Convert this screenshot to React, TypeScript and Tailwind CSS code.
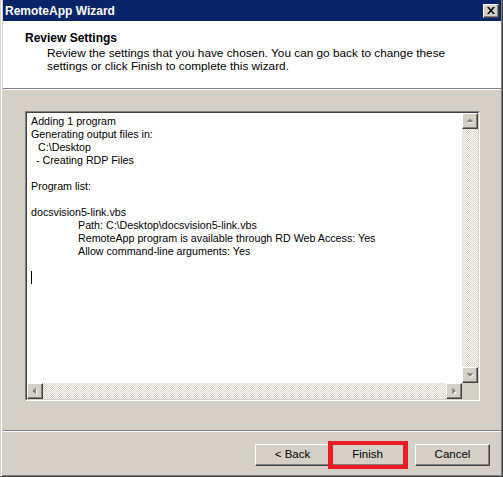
import React from "react";

const bevelOut =
  "border border-t-white border-l-white border-r-[#404040] border-b-[#404040] shadow-[inset_-1px_-1px_0_#808080,inset_1px_1px_0_#d4d0c8]";

function Arrow({ dir }: { dir: "up" | "down" | "left" | "right" }) {
  const pts: Record<string, string> = {
    up: "4,9 8,5 12,9",
    down: "4,6 8,10 12,6",
    left: "9,4 5,8 9,12",
    right: "6,4 10,8 6,12",
  };
  return (
    <svg width="14" height="14" viewBox="0 0 16 16" className="block">
      <polygon points={pts[dir]} fill="#ffffff" transform="translate(1,1)" />
      <polygon points={pts[dir]} fill="#808080" />
    </svg>
  );
}

function ScrollButton({ dir }: { dir: "up" | "down" | "left" | "right" }) {
  return (
    <div className={`w-[16px] h-[16px] shrink-0 bg-[#d4d0c8] flex items-center justify-center ${bevelOut}`}>
      <Arrow dir={dir} />
    </div>
  );
}

const checker = "bg-[repeating-conic-gradient(#d4d0c8_0_25%,#ffffff_0_50%)] bg-[length:2px_2px]";

const lines: { text: string; indent?: string }[] = [
  { text: "Adding 1 program" },
  { text: "Generating output files in:" },
  { text: "C:\\Desktop", indent: "pl-[7px]" },
  { text: "- Creating RDP Files", indent: "pl-[5px]" },
  { text: "" },
  { text: "Program list:" },
  { text: "" },
  { text: "docsvision5-link.vbs" },
  { text: "Path: C:\\Desktop\\docsvision5-link.vbs", indent: "pl-[47px]" },
  { text: "RemoteApp program is available through RD Web Access: Yes", indent: "pl-[47px]" },
  { text: "Allow command-line arguments: Yes", indent: "pl-[47px]" },
  { text: "" },
];

function WizButton({ label }: { label: string }) {
  return (
    <button
      className={`w-[75px] h-[22px] bg-[#d4d0c8] text-[11.5px] text-black leading-none flex items-center justify-center ${bevelOut}`}
    >
      {label}
    </button>
  );
}

export default function App() {
  return (
    <div className="w-[503px] h-[477px] bg-[#d4d0c8] font-['Liberation_Sans',Arial,sans-serif] text-black select-none">
      <div className="w-full h-full flex flex-col border-l border-l-[#d4d0c8] border-r border-r-[#404040] border-b border-b-[#404040] shadow-[inset_1px_0_0_#ffffff,inset_-1px_-1px_0_#808080]">
        <div className="pl-[2px] pr-[1px]">
          {/* title bar */}
          <div className="h-[21px] bg-[#0a246a] flex items-center justify-between pl-[2px] pr-[2px]">
            <span className="text-white font-bold text-[12px] leading-none">RemoteApp Wizard</span>
            <div className={`w-[16px] h-[14px] bg-[#d4d0c8] flex items-center justify-center ${bevelOut}`}>
              <svg width="8" height="7" viewBox="0 0 8 7">
                <path d="M0 0h2l2 2.5L6 0h2L5 3.5 8 7H6L4 4.5 2 7H0l3-3.5z" fill="#000" />
              </svg>
            </div>
          </div>
        </div>

        <div className="pl-[2px] pr-[1px] flex flex-col flex-1">
          {/* header */}
          <div className="h-[67px] bg-white pl-[22px] pt-[11px]">
            <div className="font-bold text-[12px] leading-[13px]">Review Settings</div>
            <div className="pl-[22px] pt-[2px] text-[11.8px] leading-[13px]">
              <div>Review the settings that you have chosen. You can go back to change these</div>
              <div>settings or click Finish to complete this wizard.</div>
            </div>
          </div>
          <div className="h-[2px] border-t border-t-[#808080] border-b border-b-white" />

          {/* body */}
          <div className="flex-1 pt-[21px] pl-[22px] pr-[21px]">
            <div className="h-[290px] flex flex-col border border-t-[#808080] border-l-[#808080] border-r-white border-b-white">
              <div className="flex-1 flex flex-col border border-t-[#404040] border-l-[#404040] border-r-[#d4d0c8] border-b-[#d4d0c8] bg-white">
                <div className="flex-1 flex min-h-0">
                  <div className="flex-1 pl-[4px] pt-[2px] text-[10.7px] leading-[13px] whitespace-pre">
                    {lines.map((l, i) => (
                      <div key={i} className={`h-[13px] ${l.indent ?? ""}`}>
                        {l.text}
                      </div>
                    ))}
                    <div className="h-[13px] flex items-center">
                      <span className="w-[1px] h-[13px] bg-black" />
                    </div>
                  </div>
                  <div className="w-[16px] flex flex-col">
                    <ScrollButton dir="up" />
                    <div className={`flex-1 ${checker}`} />
                    <ScrollButton dir="down" />
                  </div>
                </div>
                <div className="h-[16px] flex">
                  <ScrollButton dir="left" />
                  <div className={`flex-1 ${checker}`} />
                  <ScrollButton dir="right" />
                  <div className="w-[16px] h-[16px] bg-[#d4d0c8]" />
                </div>
              </div>
            </div>
          </div>

          <div className="h-[2px] border-t border-t-[#808080] border-b border-b-white" />

          {/* buttons */}
          <div className="h-[44px] pt-[12px] pl-[252px] flex items-start">
            <WizButton label="< Back" />
            <div className="relative">
              <WizButton label="Finish" />
              <div className="absolute left-[-2px] top-[-3px] w-[80px] h-[28px] border-[#ed1c24] border-x-[5px] border-y-[4px] pointer-events-none" />
            </div>
            <div className="ml-[10px]">
              <WizButton label="Cancel" />
            </div>
          </div>
        </div>
      </div>
    </div>
  );
}
